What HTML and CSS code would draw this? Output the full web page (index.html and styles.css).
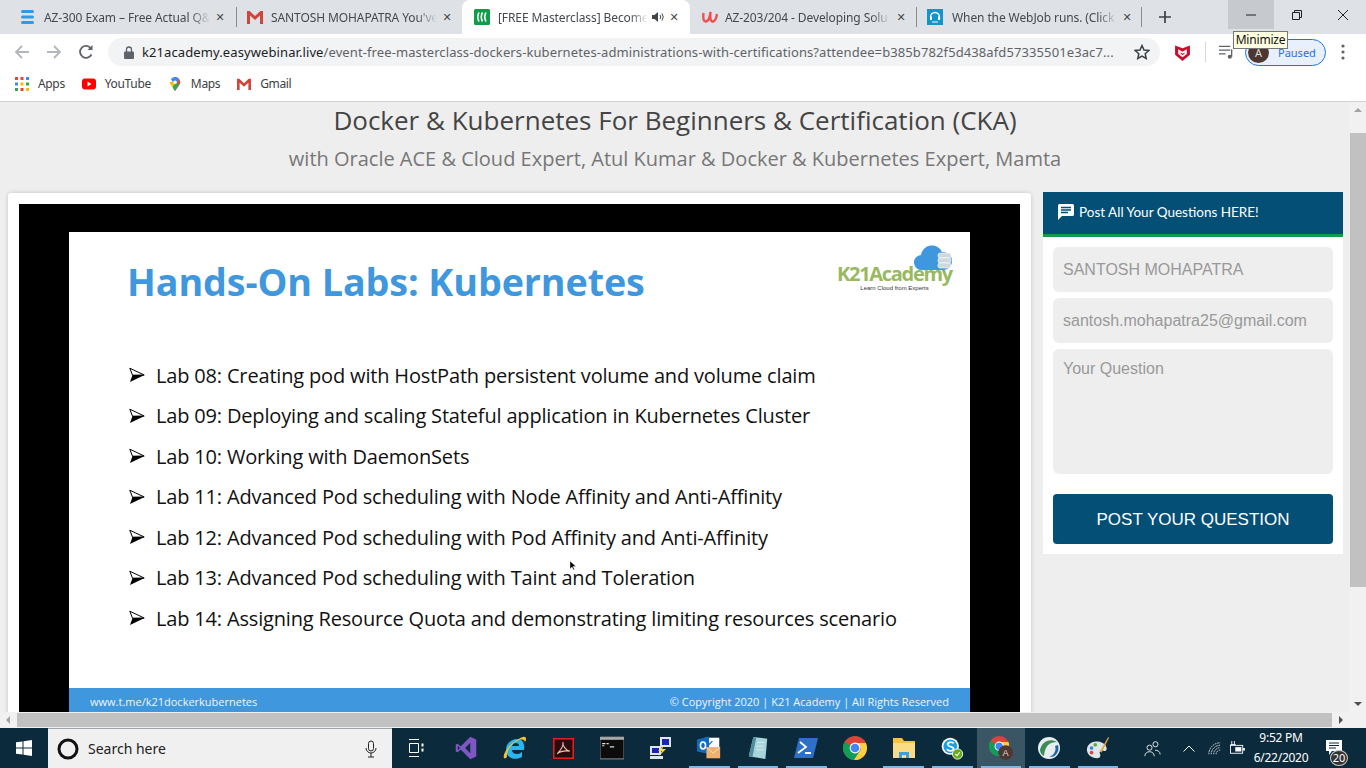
FILE: index.html
```html
<!DOCTYPE html>
<html lang="en">
<head>
<meta charset="utf-8">
<title>Docker &amp; Kubernetes For Beginners &amp; Certification (CKA)</title>
<link rel="stylesheet" href="styles.css">
</head>
<body>
<svg class="defs" width="0" height="0">
  <symbol id="chrome" viewBox="0 0 24 24">
    <circle cx="12" cy="12" r="12" fill="#db4437"/>
    <path d="M12 12 1.600 6 A12 12 0 0 0 12 24 L18 13.500Z" fill="#0f9d58"/>
    <path d="M12 7H22.900A12 12 0 0 1 11 24L18 13Z" fill="#ffcd40"/>
    <circle cx="12" cy="12" r="5.400" fill="#fff"/><circle cx="12" cy="12" r="4.300" fill="#4285f4"/>
  </symbol>
  <symbol id="gmail" viewBox="0 0 16 14">
    <path d="M0 1h2.600L8 6 13.400 1H16v13h-3V5.600L8 10 3 5.600V14H0Z" fill="#d0453a"/>
  </symbol>
  <symbol id="bullet" viewBox="0 0 16 16">
    <path d="M.8 1.200 15.200 8 3.500 8.200Z" fill="#fff" stroke="#000" stroke-width="1"/>
    <path d="M15.500 8 1 15 3.500 8Z" fill="#000"/>
  </symbol>
</svg>

<header class="tabstrip">
  <div class="tab t1">
    <svg class="fav" viewBox="0 0 14 16"><rect x="0" y="1" width="13" height="3" rx="1.500" fill="#2e9bea"/><rect x="0" y="6.500" width="13" height="3" rx="1.500" fill="#2e9bea"/><rect x="0" y="12" width="13" height="3" rx="1.500" fill="#2e9bea"/></svg>
    <span class="tab-title">AZ-300 Exam – Free Actual Q&amp;</span><span class="x">✕</span>
  </div>
  <div class="tab t2 sep">
    <svg class="fav" viewBox="0 0 16 14"><use href="#gmail"/></svg>
    <span class="tab-title">SANTOSH MOHAPATRA You've</span><span class="x">✕</span>
  </div>
  <div class="tab t3 active">
    <svg class="fav" viewBox="0 0 16 16"><rect width="16" height="16" rx="1.500" fill="#0f9d48"/><path d="M5 3.500Q2.500 8 5 12.500M8.500 3.500Q6 8 8.500 12.500M12 3.500Q9.500 8 12 12.500" stroke="#fff" stroke-width="1.600" fill="none"/></svg>
    <span class="tab-title">[FREE Masterclass] Become</span>
    <svg class="spk" viewBox="0 0 12 12"><path d="M0 4h2.500L6 1v10L2.500 8H0Z" fill="#444"/><path d="M8 4q1.500 2 0 4M10 2.500q2.500 3.500 0 7" stroke="#444" fill="none"/></svg>
    <span class="x">✕</span>
  </div>
  <div class="tab t4">
    <svg class="fav" viewBox="0 0 16 16"><path d="M1.500 4Q.5 13 4 12.500 7.500 12 8.500 3 7.500 13 11 12.500 14 12 15 5" stroke="#ec5252" stroke-width="2.400" fill="none"/></svg>
    <span class="tab-title">AZ-203/204 - Developing Solu</span><span class="x">✕</span>
  </div>
  <div class="tab t5 sep sep-end">
    <svg class="fav" viewBox="0 0 16 16"><rect width="16" height="16" fill="#1295c9"/><path d="M3.500 8a4.500 4.500 0 0 1 9 0v2" stroke="#fff" stroke-width="1.300" fill="none"/><rect x="3" y="7.500" width="2" height="3.500" fill="#fff"/><rect x="11" y="7.500" width="2" height="3.500" fill="#fff"/><path d="M5 13h6" stroke="#fff"/></svg>
    <span class="tab-title">When the WebJob runs. (Click</span><span class="x">✕</span>
  </div>
  <svg class="newtab" viewBox="0 0 12 12"><path d="M6 0v12M0 6h12" stroke="#3c4043" stroke-width="1.700"/></svg>
  <div class="winctl">
    <div class="wbtn hover"><svg viewBox="0 0 10 10"><path d="M0 5h10" stroke="#222"/></svg></div>
    <div class="wbtn"><svg viewBox="0 0 10 10"><path d="M.5 2.500h7v7h-7ZM2.500 2.500v-2h7v7h-2" stroke="#222" fill="none"/></svg></div>
    <div class="wbtn"><svg viewBox="0 0 10 10"><path d="M0 0l10 10M10 0 0 10" stroke="#222"/></svg></div>
  </div>
</header>

<nav class="toolbar">
  <svg class="navi" viewBox="0 0 16 16"><path d="M15 8H2M8 2 2 8l6 6" stroke="#b3b6ba" stroke-width="1.800" fill="none"/></svg>
  <svg class="navi" viewBox="0 0 16 16"><path d="M1 8h13M8 2l6 6-6 6" stroke="#b3b6ba" stroke-width="1.800" fill="none"/></svg>
  <svg class="navi reload" viewBox="0 0 16 16"><path d="M13.500 10.500A6 6 0 1 1 13 4.500" stroke="#5f6368" stroke-width="1.800" fill="none"/><path d="M14.500 1v5h-5Z" fill="#5f6368"/></svg>
  <div class="omnibox">
    <svg class="lock" viewBox="0 0 10 13"><path d="M2.500 6V3.500a2.500 2.500 0 0 1 5 0V6" stroke="#5f6368" stroke-width="1.300" fill="none"/><rect y="5.500" width="10" height="7.500" rx="1" fill="#5f6368"/></svg>
    <span class="url"><b>k21academy.easywebinar.live</b>/event-free-masterclass-dockers-kubernetes-administrations-with-certifications?attendee=b385b782f5d438afd57335501e3ac7...</span>
    <svg class="star" viewBox="0 0 16 16"><path d="M8 1.500 10 6l4.800.5-3.600 3.200 1 4.800L8 12l-4.200 2.500 1-4.800L1.200 6.500 6 6Z" stroke="#3c4043" stroke-width="1.500" fill="none"/></svg>
  </div>
  <svg class="mcafee" viewBox="0 0 14 16"><path d="M0 1.500 7 4l7-2.500V10l-7 6-7-6Z" fill="#c8102e"/><path d="M3 5 7 7.200 11 5v4.500L7 12.500 3 9.500Z" fill="#fff"/><path d="M5 8 7 9.200 9 8v1L7 10.500 5 9Z" fill="#c8102e"/></svg>
  <span class="tooldiv"></span>
  <svg class="media" viewBox="0 0 16 14"><path d="M0 1h12M0 5h12M0 9h7" stroke="#5f6368" stroke-width="1.500"/><path d="M13.500 4v8" stroke="#5f6368" stroke-width="1.400"/><circle cx="11.500" cy="12" r="2.200" fill="#5f6368"/></svg>
  <div class="paused"><span class="avatar">A</span><span>Paused</span></div>
  <svg class="kebab" viewBox="0 0 4 16"><circle cx="2" cy="2" r="1.600" fill="#5f6368"/><circle cx="2" cy="8" r="1.600" fill="#5f6368"/><circle cx="2" cy="14" r="1.600" fill="#5f6368"/></svg>
</nav>

<nav class="bookmarks">
  <div class="bm">
    <svg class="bmi" viewBox="0 0 14 14"><g fill="#ea4335"><rect width="3" height="3"/><rect x="5.500" width="3" height="3"/></g><rect x="11" width="3" height="3" fill="#4285f4"/><rect y="5.500" width="3" height="3" fill="#4285f4"/><rect x="5.500" y="5.500" width="3" height="3" fill="#fbbc05"/><rect x="11" y="5.500" width="3" height="3" fill="#34a853"/><rect y="11" width="3" height="3" fill="#34a853"/><rect x="5.500" y="11" width="3" height="3" fill="#ea4335"/><rect x="11" y="11" width="3" height="3" fill="#fbbc05"/></svg>
    <span>Apps</span>
  </div>
  <div class="bm">
    <svg class="bmi" viewBox="0 0 14 14"><rect y="1.500" width="14" height="11" rx="3" fill="#f00"/><path d="M5.500 4.500v5L9.500 7Z" fill="#fff"/></svg>
    <span>YouTube</span>
  </div>
  <div class="bm">
    <svg class="bmi" viewBox="0 0 12 16"><path d="M6 0a6 6 0 0 1 6 6c0 2-1 3-2.500 5L6 16 3.500 12 6 6Z" fill="#ea4335"/><path d="M10.800 2.500 3.500 11.500C1 9 0 7.500 0 6Z" fill="#fbbc05"/><path d="M6 0a6 6 0 0 1 4.800 2.500L8 6H4L1.200 2.500A6 6 0 0 1 6 0Z" fill="#4285f4"/><path d="M3 11 8 6l3 2-5 8Z" fill="#34a853"/><circle cx="6" cy="6" r="2" fill="#fff"/></svg>
    <span>Maps</span>
  </div>
  <div class="bm">
    <svg class="bmi" viewBox="0 0 16 14"><use href="#gmail"/></svg>
    <span>Gmail</span>
  </div>
</nav>

<div class="viewport">
  <main class="page">
    <div class="titles">
      <h1>Docker &amp; Kubernetes For Beginners &amp; Certification (CKA)</h1>
      <h2>with Oracle ACE &amp; Cloud Expert, Atul Kumar &amp; Docker &amp; Kubernetes Expert, Mamta</h2>
    </div>
    <div class="columns">
      <section class="card">
        <div class="video">
          <div class="slide">
            <div class="slide-head">
              <h3>Hands-On Labs: Kubernetes</h3>
              <div class="logo">
                <svg class="cloud" viewBox="0 0 38 26"><path d="M8 25a7.500 7.500 0 0 1-1-15 11 11 0 0 1 21-3 8 8 0 0 1 2 18Z" fill="#3f97de"/><g fill="#cfd8dc" stroke="#fff" stroke-width=".6"><rect x="24" y="8" width="13" height="5" rx="2"/><rect x="24" y="13" width="13" height="5" rx="2"/><rect x="24" y="18" width="13" height="5" rx="2"/></g></svg>
                <div class="logo-name">K21Academy</div>
                <div class="logo-tag">Learn Cloud from Experts</div>
              </div>
            </div>
            <ul class="labs">
              <li><svg class="bullet"><use href="#bullet"/></svg>Lab 08: Creating pod with HostPath persistent volume and volume claim</li>
              <li><svg class="bullet"><use href="#bullet"/></svg>Lab 09: Deploying and scaling Stateful application in Kubernetes Cluster</li>
              <li><svg class="bullet"><use href="#bullet"/></svg>Lab 10: Working with DaemonSets</li>
              <li><svg class="bullet"><use href="#bullet"/></svg>Lab 11: Advanced Pod scheduling with Node Affinity and Anti-Affinity</li>
              <li><svg class="bullet"><use href="#bullet"/></svg>Lab 12: Advanced Pod scheduling with Pod Affinity and Anti-Affinity</li>
              <li><svg class="bullet"><use href="#bullet"/></svg>Lab 13: Advanced Pod scheduling with Taint and Toleration</li>
              <li><svg class="bullet"><use href="#bullet"/></svg>Lab 14: Assigning Resource Quota and demonstrating limiting resources scenario</li>
            </ul>
            <div class="slide-foot"><span>www.t.me/k21dockerkubernetes</span><span>© Copyright 2020 | K21 Academy | All Rights Reserved</span></div>
          </div>
        </div>
      </section>
      <aside class="qa">
        <div class="qa-head">
          <svg class="qa-icon" viewBox="0 0 16 16"><path d="M1.500 0h13A1.500 1.500 0 0 1 16 1.500v9a1.500 1.500 0 0 1-1.500 1.500H4l-4 4V1.500A1.500 1.500 0 0 1 1.500 0Z" fill="#fff"/><path d="M3 3.500h10M3 6h10M3 8.500h7" stroke="#034f75" stroke-width="1.300"/></svg>
          <span>Post All Your Questions HERE!</span>
        </div>
        <form class="qa-form">
          <input class="field" type="text" value="SANTOSH MOHAPATRA" readonly>
          <input class="field" type="text" value="santosh.mohapatra25@gmail.com" readonly>
          <textarea class="field area" placeholder="Your Question" readonly></textarea>
          <button class="post" type="button">POST YOUR QUESTION</button>
        </form>
      </aside>
    </div>
    <svg class="cursor" viewBox="0 0 6 9"><path d="M0 0v8l2-2 1.500 3 1-.5L3 5.500h3Z" fill="#000" stroke="#fff" stroke-width=".4"/></svg>
  </main>
  <div class="vscroll">
    <svg class="arrow" viewBox="0 0 8 6"><path d="M4 1 8 5H0Z" fill="#a3a3a3"/></svg>
    <div class="vtrack"><div class="vthumb"></div></div>
    <svg class="arrow" viewBox="0 0 8 6"><path d="M4 5 8 1H0Z" fill="#505050"/></svg>
  </div>
</div>

<div class="hscroll">
  <svg class="harrow" viewBox="0 0 6 8"><path d="M1 4l4-4v8Z" fill="#a3a3a3"/></svg>
  <div class="hthumb"></div>
  <svg class="harrow" viewBox="0 0 6 8"><path d="M5 4 1 0v8Z" fill="#505050"/></svg>
</div>

<footer class="taskbar">
  <div class="start"><svg viewBox="0 0 16 16"><path d="M0 2.300 6.500 1.400V7.500H0ZM7.500 1.200 16 0V7.500H7.500ZM0 8.500H6.500V14.600L0 13.700ZM7.500 8.500H16V16L7.500 14.800Z" fill="#fff"/></svg></div>
  <div class="search">
    <svg class="cortana" viewBox="0 0 22 22"><circle cx="11" cy="11" r="9" stroke="#111" stroke-width="3" fill="none"/></svg>
    <span>Search here</span>
    <svg class="mic" viewBox="0 0 12 18"><rect x="3.500" y="1" width="5" height="10" rx="2.500" stroke="#222" fill="none"/><path d="M1 8a5 5 0 0 0 10 0M6 13v4M3 17h6" stroke="#222" fill="none"/></svg>
  </div>
  <div class="tb-item tv"><svg class="ti" viewBox="0 0 16 18"><path d="M1 .5h10M1 17.500h10M1.500 4.500h9v9h-9Z" stroke="#fff" fill="none"/><path d="M13.500 4.500h2v3h-2ZM13.500 9.500h2v3h-2Z" fill="#fff"/></svg></div>
  <div class="icons">
    <div class="tb-item"><svg class="ti" viewBox="0 0 24 28"><path d="M17 1 24 4v20l-7 3L6 16l-4 3-2-1V10l2-1 4 3Z" fill="#7e57c2"/><path d="M17 8v12l-6-6ZM2.500 11.500 5 14l-2.500 2.500Z" fill="#0b2b3c"/></svg></div>
    <div class="tb-item"><svg class="ti" viewBox="0 0 24 24"><path d="M3 14C3 7 9 3 14 3c6 0 8 5 7 11H9c0 5 7 5 10 2v5c-7 4-16 1-16-7ZM9 10h7c0-4-6-4-7 0Z" fill="#2ab5ef"/><path d="M1 22C-1 18 8 5 20 1c3-1 4 2 2 5-1-3-4-3-8-1C8 8 3 16 4 21c-1 1-2 2-3 1Z" fill="#f3c333"/></svg></div>
    <div class="tb-item"><svg class="ti acro" viewBox="0 0 20 20"><rect x=".75" y=".75" width="18.500" height="18.500" fill="#2a0a0a" stroke="#e0201c" stroke-width="1.500"/><path d="M4 15C8 11 10 7 9.500 4 9 7 12 12 16 12.500 12 12 7 12.500 4 15Z" stroke="#f4c0b0" fill="none"/></svg></div>
    <div class="tb-item"><svg class="ti" viewBox="0 0 22 20"><rect width="22" height="20" rx="1" fill="#0c0c0c" stroke="#777"/><rect width="22" height="2.500" fill="#aaa"/><path d="M2 6h3M2 8h2M6 6h2M9 9h4" stroke="#ddd"/></svg></div>
    <div class="tb-item"><svg class="ti" viewBox="0 0 24 24"><rect x="11" y="1" width="11" height="10" fill="#dfe5ea"/><rect x="13" y="3" width="7" height="6" fill="#1a23b8"/><rect x="1" y="10" width="11" height="9" fill="#dfe5ea"/><rect x="3" y="12" width="7" height="5" fill="#1a23b8"/><rect x="1" y="20" width="13" height="3" fill="#dfe5ea"/><path d="M16 8 9 15h4l-3 5 7-7h-4Z" fill="#f4e22e"/></svg></div>
    <div class="tb-item on"><svg class="ti" viewBox="0 0 28 26"><rect x="9" y="1" width="17" height="14" fill="#fff"/><path d="M12 7l2 2 4-4" stroke="#1173c4" stroke-width="1.500" fill="none"/><path d="M0 3 14 0v20L0 17Z" fill="#0f6cbd"/><ellipse cx="7" cy="10" rx="3" ry="4" stroke="#fff" stroke-width="1.800" fill="none"/><rect x="11" y="12" width="16" height="13" fill="#f0b070"/><path d="M11 12l8 7 8-7" stroke="#fbe4c4" fill="none"/></svg></div>
    <div class="tb-item on"><svg class="ti" viewBox="0 0 24 26"><path d="M7 1 22 3l-2 22L2 22Z" fill="#a8d5dc"/><path d="M7 1 2 22l4 1L10 2Z" fill="#4d8e9a"/><path d="M11 7h8M10 11h8M10 15h8" stroke="#d8eef0"/></svg></div>
    <div class="tb-item on"><svg class="ti" viewBox="0 0 24 22"><path d="M5 1h19l-5 20H0Z" fill="#2d6fc9"/><path d="M6 5l6 5-8 6M11 16h6" stroke="#fff" stroke-width="1.800" fill="none"/></svg></div>
    <div class="tb-item"><svg class="ti" viewBox="0 0 24 24"><use href="#chrome"/></svg></div>
    <div class="tb-item on"><svg class="ti" viewBox="0 0 24 22"><path d="M1 1h9l2 3h11v17H1Z" fill="#f6c342"/><rect x="1" y="6" width="22" height="15" fill="#fbdc86"/><path d="M7 21v-6h10v6h-3v-3h-4v3Z" fill="#3aa0e0"/></svg></div>
    <div class="tb-item on"><svg class="ti" viewBox="0 0 26 28"><circle cx="11" cy="12" r="10" fill="#fff"/><circle cx="11" cy="12" r="8" fill="#1aa1e1"/><path d="M15 8.500C13 6.500 7.500 7 8 10c.5 3 7 2 7 5s-6 3-8 .5" stroke="#fff" stroke-width="2" fill="none"/><circle cx="19.500" cy="21" r="6" fill="#6aaa1e" stroke="#fff"/><path d="M17 21l2 2 3-4" stroke="#fff" stroke-width="1.300" fill="none"/></svg></div>
    <div class="tb-item on active"><svg class="ti" viewBox="0 0 26 26"><use href="#chrome" width="22" height="22"/><circle cx="18" cy="18" r="8" fill="#4d3730"/><text class="ti-a" x="18" y="21.500">A</text></svg></div>
    <div class="tb-item on"><svg class="ti" viewBox="0 0 24 24"><circle cx="12" cy="12" r="11" fill="#e8eef0"/><path d="M3 14C5 5 13 2 20 6 13 6 8 9 7 20 5 19 3 17 3 14Z" fill="#3d8b57"/><path d="M21 9c2 7-3 13-9 12 4-1 8-6 6-11Z" fill="#1c64a8"/></svg></div>
    <div class="tb-item on"><svg class="ti" viewBox="0 0 26 26"><path d="M11 6C5 6 1 10 1 15s5 9 11 9c4 0 4-3 3-5s1-4 4-3 4-1 3-4c-1-4-6-6-11-6Z" fill="#dfe5e8"/><circle cx="6" cy="13" r="2" fill="#3a86d1"/><circle cx="10" cy="9.500" r="2" fill="#5cab3d"/><circle cx="6" cy="18" r="2" fill="#d9483b"/><path d="M24 1 15 17l2 1 8-16Z" fill="#e6a33c"/></svg></div>
  </div>
  <div class="tray">
    <svg class="tr people" viewBox="0 0 20 20"><circle cx="13.500" cy="5" r="3" stroke="#fff" fill="none"/><circle cx="6.500" cy="9" r="3" stroke="#fff" fill="none"/><path d="M1 19c0-7 11-7 11 0M13 12c3 0 6 1.500 6 5" stroke="#fff" fill="none"/></svg>
    <svg class="tr chev" viewBox="0 0 12 7"><path d="M.5 6.500 6 1l5.500 5.500" stroke="#fff" fill="none"/></svg>
    <svg class="tr wifi" viewBox="0 0 16 16"><path d="M1 15A14 14 0 0 1 15 1M4 15A11 11 0 0 1 15 4M7 15a8 8 0 0 1 8-8M10 15a5 5 0 0 1 5-5" stroke="#fff" stroke-dasharray="2 1" fill="none"/></svg>
    <svg class="tr batt" viewBox="0 0 18 16"><path d="M3 0v4M6 0v4M1.500 4h6" stroke="#fff"/><rect x="1.500" y="5" width="14" height="9" stroke="#fff" fill="none"/><rect x="7" y="7" width="7" height="5" fill="#fff"/><rect x="16" y="8" width="2" height="3" fill="#fff"/></svg>
    <div class="clock"><span>9:52 PM</span><span>6/22/2020</span></div>
    <div class="notif">
      <svg viewBox="0 0 16 15"><path d="M0 0h16v11H6l-3 4v-4H0Z" fill="#fff"/><path d="M3 3h10M3 5.500h10M3 8h7" stroke="#0b2b3c"/></svg>
      <span class="badge">20</span>
    </div>
  </div>
</footer>

<div class="tooltip">Minimize</div>
</body>
</html>
```

FILE: styles.css
```css
* { box-sizing: border-box; }
html, body { margin: 0; height: 100%; }
body {
  width: 1366px; height: 768px; overflow: hidden;
  display: flex; flex-direction: column;
  font-family: "Open Sans", "Noto Sans", sans-serif;
  background: #fff; position: relative;
}
.defs { position: absolute; }

/* Tab strip */
.tabstrip { height: 34px; flex: none; background: #dee1e6; display: flex; align-items: stretch; }
.tab { position: relative; display: flex; align-items: center; font: 12px "Noto Sans", sans-serif; color: #45494d; height: 34px; }
.tab .fav { width: 16px; height: 16px; flex: none; margin-right: 8px; }
.tab-title { flex: 1; white-space: nowrap; min-width: 0; letter-spacing: -.1px;
  -webkit-mask-image: linear-gradient(to right, #000 88%, transparent 100%); mask-image: linear-gradient(to right, #000 88%, transparent 100%); }
.x { flex: none; width: 12px; font: bold 11px "DejaVu Sans", sans-serif; color: #45494d; text-align: center; margin-left: 4px; }
.t1 { width: 236px; padding: 0 10px 0 20px; }
.t2 { width: 226px; padding: 0 9px 0 11px; }
.t3 { width: 228px; padding: 0 10px 0 12px; background: #fff; border-radius: 8px 8px 0 0; }
.t4 { width: 226px; padding: 0 9px 0 12px; }
.t5 { width: 226px; padding: 0 9px 0 11px; }
.t4 .fav { margin-right: 7px; }
.t5 .fav { margin-right: 9px; }
.sep::before { content: ""; position: absolute; left: 0; top: 7px; height: 20px; width: 1px; background: #888c92; }
.sep-end::after { content: ""; position: absolute; right: 0; top: 7px; height: 20px; width: 1px; background: #888c92; }
.spk { width: 12px; height: 12px; flex: none; margin-left: 4px; }
.newtab { width: 12px; height: 12px; flex: none; align-self: center; margin-left: 17px; }
.winctl { margin-left: auto; display: flex; align-items: flex-start; }
.wbtn { width: 46px; height: 29px; display: flex; align-items: center; justify-content: center; }
.wbtn svg { width: 10px; height: 10px; }
.wbtn.hover { background: #c6c9cd; }

/* Toolbar */
.toolbar { height: 34px; flex: none; background: #fff; display: flex; align-items: center; padding: 2px 0 0 14px; }
.navi { width: 16px; height: 16px; flex: none; margin-right: 16px; }
.navi.reload { margin-right: 0; }
.omnibox { width: 1052px; height: 28px; margin-left: 14px; background: #f1f3f4; border-radius: 14px; display: flex; align-items: center; padding: 0 10px 0 16px; }
.lock { width: 10px; height: 13px; flex: none; margin-right: 8px; }
.url { flex: 1; font: 13px "Noto Sans", sans-serif; letter-spacing: .1px; color: #5f6368; white-space: nowrap; overflow: hidden; }
.url b { font-weight: 400; color: #202124; }
.star { width: 16px; height: 16px; flex: none; margin-left: 8px; }
.mcafee { width: 15px; height: 17px; flex: none; margin-left: 15px; }
.tooldiv { width: 1px; height: 20px; background: #d5d7da; margin-left: 15px; flex: none; }
.media { width: 15px; height: 14px; flex: none; margin-left: 13px; }
.paused { width: 81px; height: 27px; margin-left: 11px; flex: none; border: 1px solid #1a73e8; border-radius: 14px; background: #e8f0fe; display: flex; align-items: center; gap: 9px; font: 11px "Noto Sans", sans-serif; color: #1a73e8; padding-left: 2px; }
.avatar { width: 21px; height: 21px; border-radius: 50%; background: #4d3730; color: #ddd; font-size: 11px; display: flex; align-items: center; justify-content: center; }
.kebab { width: 4px; height: 16px; flex: none; margin-left: 15px; }

/* Bookmarks */
.bookmarks { height: 34px; flex: none; background: #fff; border-bottom: 1px solid #d0d2d4; display: flex; align-items: center; padding: 0 0 2px 15px; gap: 17px; font: 12px "Noto Sans", sans-serif; letter-spacing: -.35px; color: #3c4043; }
.bm { display: flex; align-items: center; gap: 9px; }
.bmi { width: 14px; height: 14px; flex: none; }

/* Page */
.viewport { flex: 1; min-height: 0; display: flex; background: #eee; overflow: hidden; }
.page { flex: 1; min-width: 0; position: relative; }
.titles { text-align: center; color: #555; font-family: "Open Sans", sans-serif; }
h1 { margin: 0; padding-top: 2px; font-size: 26px; line-height: 33px; font-weight: 400; color: #444; }
h2 { margin: 0; padding-top: 9px; font-size: 20px; line-height: 25px; font-weight: 400; color: #777; }
.columns { display: flex; align-items: flex-start; padding: 21px 7px 0 8px; gap: 12px; }
.card { width: 1023px; flex: none; background: #fff; border-radius: 3px; box-shadow: 0 0 4px rgba(0,0,0,.18); padding: 11px; margin-top: 1px; }
.video { background: #000; padding: 28px 50px 100px; height: 600px; }
.slide { width: 901px; height: 480px; background: #fff; display: flex; flex-direction: column; }
.slide-head { height: 119px; flex: none; display: flex; justify-content: space-between; padding: 27px 18px 0 58px; }
h3 { margin: 0; color: #3f97de; font-size: 37.700px; line-height: 46px; font-weight: 700; letter-spacing: -.1px; }
.logo { position: relative; width: 115px; padding-top: 19px; margin-top: -14px; text-align: center; }
.cloud { position: absolute; right: 0; top: 0; width: 38px; height: 26px; }
.logo-name { position: relative; font-size: 20px; line-height: 20px; font-weight: 700; color: #98b960; letter-spacing: -1.300px; white-space: nowrap; }
.logo-tag { font: 6px/8px "Liberation Sans", sans-serif; color: #333; }
.labs { list-style: none; margin: 0; padding: 11.500px 0 0 60px; display: flex; flex-direction: column; gap: 15.500px; font-size: 20px; line-height: 25px; color: #111; font-weight: 500; }
.labs li { display: flex; align-items: center; white-space: nowrap; letter-spacing: -.17px; }
.bullet { width: 16px; height: 16px; flex: none; margin-right: 11px; }
.slide-foot { margin-top: auto; height: 24px; flex: none; background: #3f97de; color: #f0f6fb; font-size: 11px; display: flex; align-items: center; justify-content: space-between; padding: 3px 21px 0; }

/* Q&A */
.qa { width: 300px; flex: none; background: #fff; }
.qa-head { height: 45px; background: #034f75; border-bottom: 3px solid #109a55; color: #fff; display: flex; align-items: center; gap: 5px; padding: 0 0 2px 15px; font: 13.500px "Lato", sans-serif; }
.qa-icon { width: 16px; height: 16px; flex: none; }
.qa-form { display: flex; flex-direction: column; gap: 6px; padding: 10px; }
.field { display: block; width: 280px; height: 45px; border: 0; border-radius: 6px; background: #eee; color: #999; padding: 0 10px; font: 16px "Liberation Sans", sans-serif; outline: 0; margin: 0; }
.area { height: 125px; padding-top: 11px; resize: none; }
.area::placeholder { color: #999; opacity: 1; }
.post { height: 50px; margin-top: 14px; padding-top: 2px; border: 0; border-radius: 4px; background: #034f75; color: #fff; font: 17px "Liberation Sans", sans-serif; }
.cursor { position: absolute; left: 570px; top: 459px; width: 6px; height: 9px; }

/* Scrollbars */
.vscroll { width: 16px; flex: none; background: #f1f1f1; display: flex; flex-direction: column; align-items: center; }
.arrow { width: 8px; height: 6px; flex: none; margin: 5px 0; }
.vtrack { flex: 1; width: 100%; padding-top: 15px; }
.vthumb { height: 454px; background: #c1c1c1; }
.hscroll { height: 16px; flex: none; background: #f1f1f1; display: flex; align-items: center; padding: 0 22px 0 5px; }
.harrow { width: 6px; height: 8px; flex: none; }
.hthumb { flex: 1; height: 14px; background: #c1c1c1; margin: 0 6px; }

/* Taskbar */
.taskbar { height: 40px; flex: none; background: #0b2b3c; display: flex; align-items: stretch; color: #fff; }
.start { width: 48px; flex: none; display: flex; align-items: center; justify-content: center; }
.start svg { width: 16px; height: 16px; }
.search { width: 344px; flex: none; background: #f0f0f0; border-top: 1px solid #9aa5ab; display: flex; align-items: center; padding: 0 15px 0 9px; color: #222; font: 14px "Noto Sans", sans-serif; }
.cortana { width: 22px; height: 22px; flex: none; margin-right: 9px; }
.mic { width: 12px; height: 18px; margin-left: auto; flex: none; }
.icons { display: flex; flex: none; margin-left: 2px; }
.tb-item { width: 48.600px; height: 40px; flex: none; display: flex; align-items: center; justify-content: center; position: relative; }
.tv { width: 48px; }
.tv .ti { width: 16px; height: 18px; }
.ti { width: 24px; height: 24px; display: block; }
.acro { width: 21px; height: 21px; }
.ti-a { font: 10px "Liberation Sans", sans-serif; fill: #ddd; text-anchor: middle; }
.tb-item.on::after { content: ""; position: absolute; left: 4px; right: 4px; bottom: 0; height: 2px; background: #76b9ed; }
.tb-item.active { background: #3a5664; }
.tray { margin-left: auto; display: flex; align-items: center; }
.tr { flex: none; }
.people { width: 17px; height: 17px; margin-right: 22px; }
.chev { width: 12px; height: 7px; margin-right: 13px; }
.wifi { width: 13px; height: 13px; margin-right: 8px; }
.batt { width: 16px; height: 14px; margin-right: 7px; }
.clock { width: 58px; display: flex; flex-direction: column; align-items: center; font: 12px/20px "Noto Sans", sans-serif; letter-spacing: -.25px; flex: none; }
.notif { position: relative; width: 56px; height: 40px; flex: none; }
.notif svg { position: absolute; left: 16px; top: 12px; width: 16px; height: 15px; }
.badge { position: absolute; left: 20px; top: 22px; width: 18px; height: 16px; border-radius: 50%; background: #333; border: 1px solid #ccc; font: 11px/14px "Noto Sans", sans-serif; text-align: center; }

/* Tooltip */
.tooltip { position: absolute; left: 1233px; top: 31px; width: 55px; height: 18px; background: #ffffe1; border: 1px solid #777; font: 12px/16px "Noto Sans", sans-serif; letter-spacing: -.2px; color: #111; text-align: center; white-space: nowrap; }
```
